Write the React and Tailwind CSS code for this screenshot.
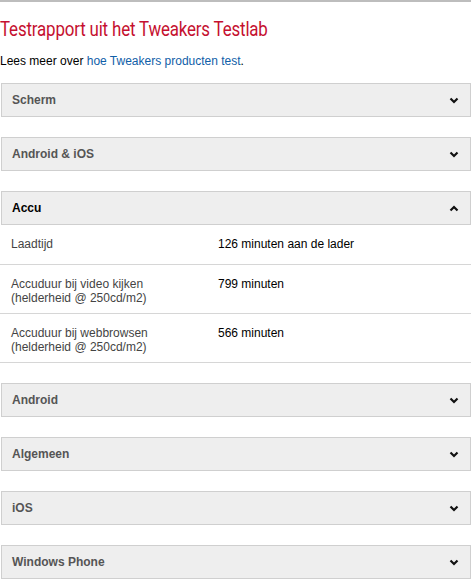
import React, { useState } from "react";

const sections = [
  { title: "Scherm" },
  { title: "Android & iOS" },
  {
    title: "Accu",
    rows: [
      { label: ["Laadtijd"], value: "126 minuten aan de lader" },
      { label: ["Accuduur bij video kijken", "(helderheid @ 250cd/m2)"], value: "799 minuten" },
      { label: ["Accuduur bij webbrowsen", "(helderheid @ 250cd/m2)"], value: "566 minuten" }
    ]
  },
  { title: "Android" },
  { title: "Algemeen" },
  { title: "iOS" },
  { title: "Windows Phone" }
];

function Chevron({ up }) {
  return (
    <svg width="10" height="7" viewBox="0 0 10 7" className="shrink-0">
      <path
        d={up ? "M1.5 5.5 L5 2 L8.5 5.5" : "M1.5 1.5 L5 5 L8.5 1.5"}
        fill="none"
        stroke="#111"
        strokeWidth="2.2"
      />
    </svg>
  );
}

export default function App() {
  const [open, setOpen] = useState("Accu");

  return (
    <div className="w-[471px] bg-white font-['Liberation_Sans',Arial,sans-serif] text-[12px]">
      <div className="h-[2px] bg-[#bdbdbd]" />
      <h2 className="mt-[15px] h-[24px] whitespace-nowrap text-[20px] leading-[24px] text-[#c5102f] font-['Roboto',sans-serif]">
        <span className="inline-block origin-left scale-x-[0.845] tracking-[-0.2px]">
          Testrapport uit het Tweakers Testlab
        </span>
      </h2>
      <p className="mt-[13px] leading-[15px] text-black">
        Lees meer over <a className="text-[#1060a8]">hoe Tweakers producten test</a>.
      </p>

      <div className="mt-[14px] flex flex-col gap-[20px]">
        {sections.map(s => {
          const isOpen = open === s.title;
          return (
            <div key={s.title}>
              <button
                onClick={() => setOpen(isOpen ? null : s.title)}
                className="ml-[1px] flex h-[34px] w-[470px] items-center justify-between border border-[#cfcfcf] bg-[#eeeeee] pl-[10px] pr-[11px] text-left"
              >
                <span className={"font-bold " + (isOpen ? "text-black" : "text-[#555]")}>{s.title}</span>
                <Chevron up={isOpen} />
              </button>
              {isOpen && s.rows && (
                <div>
                  {s.rows.map((r, i) => (
                    <div key={i} className="grid grid-cols-[207px_1fr] border-b border-[#d6d6d6] pl-[11px] pt-[12px] pb-[8px] leading-[14px]">
                      <div className="text-[#444]">
                        {r.label.map(l => (
                          <div key={l}>{l}</div>
                        ))}
                        {r.label.length === 1 && <div className="h-[5px]" />}
                      </div>
                      <div className="text-black">{r.value}</div>
                    </div>
                  ))}
                </div>
              )}
            </div>
          );
        })}
      </div>
    </div>
  );
}
